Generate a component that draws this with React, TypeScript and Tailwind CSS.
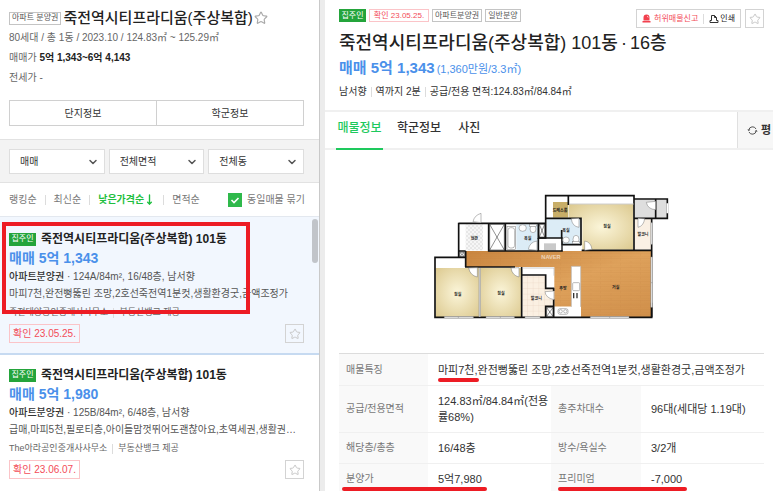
import type { ReactNode } from 'react';
import { ChevronDown, MoveDown, Star } from 'lucide-react';

type Listing = {
  price: string;
  spec: string;
  memo: string;
  agency: string;
  confirmed: string;
  selected?: boolean;
};

const NAME = '죽전역시티프라디움(주상복합)';

const listings: Listing[] = [
  {
    price: '5억 1,343',
    spec: '124A/84m², 16/48층, 남서향',
    memo: '마피7천,완전뻥뚫린 조망,2호선죽전역1분컷,생활환경굿,금액조정가',
    agency: '죽전태양공인중개사사무소',
    confirmed: '23.05.25.',
    selected: true,
  },
  {
    price: '5억 1,980',
    spec: '125B/84m², 6/48층, 남서향',
    memo: '급매,마피5천,필로티층,아이들맘껏뛰어도괜찮아요,초역세권,생활권…',
    agency: 'The아라공인중개사사무소',
    confirmed: '23.06.07.',
  },
];

function Divider() {
  return <span className="h-[10px] w-px shrink-0 bg-[#dcdcdc]" />;
}

function OwnerBadge() {
  return (
    <span className="flex h-[13px] w-[27px] shrink-0 items-center justify-center bg-[#24a43b] text-[8px] font-normal text-white">
      집주인
    </span>
  );
}

function Tag({ children }: { children: ReactNode }) {
  return (
    <span className="flex h-[13px] shrink-0 items-center border border-[#c4c4c4] px-[2px] text-[8px] text-[#555]">
      {children}
    </span>
  );
}

function StarButton() {
  return (
    <button
      aria-label="관심매물"
      className="flex size-[19px] shrink-0 items-center justify-center border border-[#d3d3d3] text-[#c8c8c8]"
    >
      <Star size={12} strokeWidth={2} />
    </button>
  );
}

function Filter({ label, value }: { label: string; value: string }) {
  return (
    <div className="relative flex-1">
      <select
        aria-label={label}
        className="block h-[25px] w-full appearance-none border border-[#dedede] bg-white pl-[10px] text-[10px] text-[#333]"
      >
        <option>{value}</option>
      </select>
      <ChevronDown
        size={12}
        strokeWidth={3}
        className="pointer-events-none absolute top-[7px] right-[6px] text-[#555]"
      />
    </div>
  );
}

function ListingCard({ item }: { item: Listing }) {
  return (
    <article
      className={
        item.selected
          ? 'relative border-b-2 border-[#c6daf1] bg-[#f2f7fe] pt-[13px] pr-[15px] pb-[10px] pl-[9px]'
          : 'relative bg-white pt-[11px] pr-[15px] pb-[10px] pl-[9px]'
      }
    >
      <h3 className="flex h-[18px] items-center gap-[5px] text-[12px] font-bold text-[#222]">
        <OwnerBadge />
        <a href="#listing">{NAME} 101동</a>
      </h3>
      <p className="text-[14px] leading-[20px] font-bold text-[#4a90ea]">매매 {item.price}</p>
      <p className="text-[10px] leading-[18px] text-[#555]">
        <span className="font-medium text-[#333]">아파트분양권</span> · {item.spec}
      </p>
      <p className="text-[10px] leading-[15px] whitespace-nowrap text-[#555]">{item.memo}</p>
      <p className="mt-[2px] flex h-[19px] items-center gap-[5px] text-[9px] whitespace-nowrap text-[#666]">
        {item.agency}
        <Divider />
        부동산뱅크 제공
      </p>
      <div className="mt-[2px] flex items-center justify-between">
        <span className="flex h-[19px] w-[71px] items-center justify-center border border-[#fbc4c8] text-[10px] whitespace-nowrap text-[#f34c59]">
          확인 {item.confirmed}
        </span>
        <StarButton />
      </div>
      {item.selected && (
        <div className="pointer-events-none absolute top-[5px] left-[2px] h-[92px] w-[248px] border-4 border-[#ed1c24]" />
      )}
    </article>
  );
}

function Sidebar() {
  return (
    <aside className="relative flex w-[320px] shrink-0 flex-col border-r border-[#c9c9c9] bg-white">
      <header className="border-b border-[#e2e2e2] pt-[8px] pr-[15px] pb-[13px] pl-[9px]">
        <div className="flex h-[20px] items-center">
          <Tag>아파트 분양권</Tag>
          <h1 className="ml-[2px] text-[15px] font-medium whitespace-nowrap text-[#222]">{NAME}</h1>
          <button aria-label="관심단지" className="ml-px text-[#aaa]">
            <Star size={14} strokeWidth={2} />
          </button>
        </div>
        <p className="text-[10px] leading-[20px] text-[#666]">
          80세대 / 총 1동 / 2023.10 / 124.83㎡ ~ 125.29㎡
        </p>
        <p className="text-[10px] leading-[20px] text-[#666]">
          매매가 <strong className="font-bold text-[#222]">5억 1,343~6억 4,143</strong>
        </p>
        <p className="text-[10px] leading-[20px] text-[#666]">전세가 -</p>
        <div className="mt-[12px] flex h-[26px] border border-[#d0d0d0] text-[10px] text-[#333]">
          <button className="flex-1 border-r border-[#d0d0d0]">단지정보</button>
          <button className="flex-1">학군정보</button>
        </div>
      </header>

      <div className="flex gap-[4px] border-b border-[#e2e2e2] bg-[#f3f3f3] pt-[9px] pr-[15px] pb-[8px] pl-[9px]">
        <Filter label="거래방식" value="매매" />
        <Filter label="면적" value="전체면적" />
        <Filter label="동" value="전체동" />
      </div>

      <div className="flex h-[34px] items-center justify-between border-b border-[#e3e8ef] pr-[14px] pl-[9px] text-[10px] whitespace-nowrap text-[#777]">
        <div className="flex items-center gap-[8px]">
          <button>랭킹순</button>
          <Divider />
          <button>최신순</button>
          <Divider />
          <button className="flex items-center font-bold text-[#1fbf3f]">
            낮은가격순
            <MoveDown size={11} strokeWidth={3} />
          </button>
          <Divider />
          <button>면적순</button>
        </div>
        <label className="flex items-center gap-[5px]">
          <span className="relative flex">
            <input type="checkbox" defaultChecked className="size-[14px] appearance-none bg-[#2fb94b]" />
            <svg viewBox="0 0 14 14" className="pointer-events-none absolute inset-0 size-[14px]">
              <path d="M3.5 7l2.5 2.5L10.5 5" fill="none" stroke="#fff" strokeWidth="1.6" />
            </svg>
          </span>
          동일매물 묶기
        </label>
      </div>

      <div className="relative">
        {listings.map((item) => (
          <ListingCard key={item.price} item={item} />
        ))}
        <div className="absolute top-[2px] right-px h-[44px] w-[6px] rounded-full bg-[#c1c4c9]" />
      </div>
    </aside>
  );
}

function FloorPlan() {
  const labels: [number, number, string][] = [
    [148, 163, '현관'],
    [308, 161, '욕실'],
    [423, 139, '욕실'],
    [405, 77, '드레스룸'],
    [546, 125, '침실'],
    [654, 151, '발코니'],
    [98, 330, '침실'],
    [228, 328, '침실'],
    [334, 343, '발코니'],
    [414, 313, '주방'],
    [572, 308, '거실'],
  ];
  return (
    <svg viewBox="0 0 750 420" className="h-[140px] w-[250px]" role="img" aria-label="평면도">
      <defs>
        <radialGradient id="room" cx="50%" cy="50%" r="70%">
          <stop offset="0" stopColor="#fbf5d9" />
          <stop offset="1" stopColor="#dcc98f" />
        </radialGradient>
        <linearGradient id="wood" x1="0" y1="0" x2="1" y2="1">
          <stop offset="0" stopColor="#c9853f" />
          <stop offset="0.5" stopColor="#dfa25c" />
          <stop offset="1" stopColor="#d08f4a" />
        </linearGradient>
        <pattern id="planks" width="60" height="14" patternUnits="userSpaceOnUse">
          <path d="M0 0H60M0 7H60M18 0V7M46 7V14" stroke="#b87432" strokeWidth="0.8" opacity="0.4" />
        </pattern>
        <pattern id="tiles" width="17" height="17" patternUnits="userSpaceOnUse">
          <rect width="17" height="17" fill="#fbf0e2" />
          <path d="M0 0H17M0 0V17" stroke="#e2cdb8" strokeWidth="1.5" />
        </pattern>
        <pattern id="mosaic" width="12" height="12" patternUnits="userSpaceOnUse">
          <rect width="12" height="12" fill="#f6f6f6" />
          <path d="M0 0L12 12M12 0L0 12" stroke="#cfcfcf" strokeWidth="1.2" />
        </pattern>
      </defs>

      <path
        d="M101 112H362V29H627V39H727V97H680V394H30V214H101Z"
        fill="#fff"
      />
      <path d="M122 195H680V394H468V362H388V243H122Z" fill="url(#wood)" />
      <path d="M122 195H680V394H468V362H388V243H122Z" fill="url(#planks)" />
      <rect x="32" y="246" width="130" height="147" fill="url(#room)" />
      <rect x="166" y="246" width="124" height="147" fill="url(#room)" />
      <path d="M432 55H625V191H472V97H432Z" fill="url(#room)" />
      <rect x="384" y="48" width="46" height="47" fill="#c8ae68" />
      <rect x="122" y="115" width="52" height="78" fill="url(#mosaic)" />
      <rect x="274" y="115" width="66" height="78" fill="#dcecf6" />
      <path d="M365 99H468V174H411V156H365Z" fill="#dcecf6" />
      <rect x="629" y="41" width="96" height="55" fill="#dedede" />
      <rect x="629" y="99" width="50" height="92" fill="#faf0e4" />
      <path d="M293 269H362V307H384V360H362V393H293Z" fill="url(#tiles)" />
      <rect x="293" y="246" width="94" height="21" fill="#fff" />
      <rect x="364" y="269" width="23" height="36" fill="#fff" />
      <rect x="439" y="241" width="28" height="122" fill="#fff" />
      <rect x="388" y="362" width="80" height="31" fill="#fff" />
      <rect x="411" y="178" width="57" height="17" fill="#fff" />
      <rect x="357" y="172" width="36" height="22" fill="#c9c9c9" />

      <g fill="none" stroke="#111" strokeWidth="5">
        <path d="M101 112H362M101 110V214M101 195H122M122 195V243M120 214H30V394H680V350M30 394V212" />
        <path d="M191 112V195H340M241 112V195M340 112V156H362V29H627V193M362 29V97H468V178M627 39H727V97H627M692 39V97" />
        <path d="M340 156V195H411V156H340M411 176H468M470 193H680V394M680 97V193M410 132V156M430 29V57M120 243H180M162 243H270M290 243V394M290 267H362V307H388M386 307V315M386 340V394M362 394V361H388" />
      </g>
      <path d="M164 246V392" stroke="#999" strokeWidth="6" />
      <path d="M164 246V392" stroke="#e4e4e4" strokeWidth="2" />
      <path d="M432 54H627M411 192V178M292 246H387V269M439 363V241H467V363" fill="none" stroke="#b5b5b5" strokeWidth="2" />
      <g stroke="#222" strokeWidth="1.5" fill="none">
        <path d="M194 115L238 192M238 115L194 192M194 115H238V192H194ZM343 115L359 153M359 115L343 153M343 115H359V153H343ZM365 365L384 391M384 365L365 391M365 365H384V391H365ZM104 199H118V212H104ZM104 199L118 212M118 199L104 212" />
      </g>
      <g fill="#fff" stroke="#777" strokeWidth="1.5">
        <rect x="246" y="121" width="26" height="69" />
        <rect x="249" y="125" width="20" height="61" rx="8" />
        <ellipse cx="293" cy="126" rx="11" ry="10" />
        <ellipse cx="324" cy="129" rx="9" ry="11" />
        <rect x="314" y="115" width="20" height="7" />
        <ellipse cx="423" cy="162" rx="10" ry="9" />
        <ellipse cx="453" cy="160" rx="9" ry="12" />
        <rect x="443" y="166" width="20" height="7" />
        <rect x="443" y="290" width="21" height="24" rx="3" />
        <rect x="399" y="368" width="30" height="17" rx="6" />
        <circle cx="407" cy="376" r="5" />
        <circle cx="421" cy="376" r="5" />
        <path d="M168 110V82Q148 88 144 107Z" />
        <path d="M336 193V165Q314 168 310 190Z" />
        <path d="M462 97V124Q441 121 439 98Z" />
        <path d="M479 193V165Q498 168 501 190Z" />
        <path d="M639 97V124Q656 120 659 98Z" />
        <path d="M692 46V71Q668 70 664 49Z" />
        <path d="M157 245V273Q135 268 131 246Z" />
        <path d="M282 245V273Q261 268 258 246Z" />
        <path d="M387 341V315L360 317Q362 336 387 341Z" />
      </g>
      <path d="M446 321V337M456 321V337" stroke="#333" strokeWidth="4" />
      <g stroke="#fff" strokeWidth="5">
        <path d="M58 394H145M183 394H268M300 394H345M496 394H612M680 110V175M680 213V364M727 52V82" />
      </g>
      <g stroke="#888" strokeWidth="1.5" fill="none">
        <path d="M58 392H145V396H58ZM183 392H268V396H183ZM300 392H345V396H300ZM496 392H612V396H496ZM678 110H682V175H678ZM678 213H682V364H678ZM100 392V396M226 392V396M554 392V396M678 290H682" />
      </g>
      <text x="378" y="219" textAnchor="middle" className="fill-white text-[17px] font-bold opacity-60">
        NAVER
      </text>
      {labels.map(([x, y, label]) => (
        <text key={`${x}-${y}`} x={x} y={y} textAnchor="middle" className="fill-[#222] text-[12px] font-bold">
          {label}
        </text>
      ))}
    </svg>
  );
}

function Label({ children, mark }: { children: ReactNode; mark?: ReactNode }) {
  return (
    <th scope="row" className="relative bg-[#f9f9f9] pl-[7px] text-left text-[10px] font-normal text-[#777]">
      {children}
      {mark}
    </th>
  );
}

function DetailTable() {
  return (
    <table className="mt-[27px] w-full table-fixed border-collapse border-t border-[#dcdcdc] text-[11px] leading-[16px] text-[#333]">
      <colgroup>
        <col className="w-[89px]" />
        <col />
        <col className="w-[90px]" />
        <col />
      </colgroup>
      <tbody>
        <tr className="h-[32px] border-b border-[#f0f0f0]">
          <Label>매물특징</Label>
          <td colSpan={3} className="pl-[10px] whitespace-nowrap">
            <span className="relative">
              마피7천
              <span className="absolute top-[14px] left-0 h-[4px] w-[41px] rounded-full bg-[#ed1c24]" />
            </span>
            ,완전뻥뚫린 조망,2호선죽전역1분컷,생활환경굿,금액조정가
          </td>
        </tr>
        <tr className="h-[47px] border-b border-[#f0f0f0]">
          <Label>공급/전용면적</Label>
          <td className="pl-[10px] break-all">124.83㎡/84.84㎡(전용률68%)</td>
          <Label>총주차대수</Label>
          <td className="pl-[10px] whitespace-nowrap">96대(세대당 1.19대)</td>
        </tr>
        <tr className="h-[31px] border-b border-[#f0f0f0]">
          <Label>해당층/총층</Label>
          <td className="pl-[10px]">16/48층</td>
          <Label>방수/욕실수</Label>
          <td className="pl-[10px]">3/2개</td>
        </tr>
        <tr className="h-[31px]">
          <Label
            mark={<span className="absolute top-[23px] left-[3px] z-10 h-[4px] w-[145px] rounded-full bg-[#ed1c24]" />}
          >
            분양가
          </Label>
          <td className="pl-[10px]">5억7,980</td>
          <Label
            mark={<span className="absolute top-[23px] left-[7px] z-10 h-[4px] w-[129px] rounded-full bg-[#ed1c24]" />}
          >
            프리미엄
          </Label>
          <td className="pl-[10px]">-7,000</td>
        </tr>
      </tbody>
    </table>
  );
}

function Detail() {
  return (
    <main className="min-w-0 flex-1 bg-white">
      <header className="pt-[9px] pr-[9px] pb-[8px] pl-[14px]">
        <div className="flex h-[19px] justify-between">
          <div className="flex gap-[3px]">
            <OwnerBadge />
            <span className="flex h-[13px] w-[60px] items-center justify-center border border-[#fbc4c8] text-[8px] text-[#f34c59]">
              확인 23.05.25.
            </span>
            <Tag>아파트분양권</Tag>
            <Tag>일반분양</Tag>
          </div>
          <div className="flex gap-[4px]">
            <div className="flex items-center gap-[5px] border border-[#d3d3d3] px-[5px] text-[8px]">
              <button className="flex items-center gap-[3px] text-[#f34c59]">
                <svg viewBox="0 0 9 9" className="size-[9px]" fill="#f2404e">
                  <path d="M1.5 6.5V3.5a3 3 0 0 1 6 0V6.5ZM0.5 7H8.5V8.5H0.5Z" />
                  <path d="M5 2.2a1.4 1.4 0 0 1 1.2 1.3" fill="none" stroke="#fff" strokeWidth="0.7" />
                </svg>
                허위매물신고
              </button>
              <Divider />
              <button className="flex items-center gap-px text-[#222]">
                <svg viewBox="0 0 10 10" className="size-[10px]" fill="none" stroke="#333">
                  <path d="M2.5 6.5V1.5H5.5L7.5 3.5V6.5M5.5 1.5V3.5H7.5M2.5 6.5H1V8.5H9V6.5H7.5" />
                </svg>
                인쇄
              </button>
            </div>
            <StarButton />
          </div>
        </div>
        <h2 className="mt-[3px] flex items-center gap-[3px] text-[18px] leading-[25px] font-medium whitespace-nowrap text-[#222]">
          <span>{NAME} 101동</span>
          <span>·</span>
          <span>16층</span>
        </h2>
        <p className="leading-[24px] text-[#4a90ea]">
          <strong className="text-[15px] font-bold">매매 5억 1,343</strong>
          <span className="ml-[2px] text-[11px]">(1,360만원/3.3㎡)</span>
        </p>
        <p className="flex h-[21px] items-center gap-[4px] text-[10px] text-[#333]">
          남서향
          <Divider />
          역까지 2분
          <Divider />
          공급/전용 면적:124.83㎡/84.84㎡
        </p>
      </header>

      <nav className="flex h-[40px] items-stretch border-y-2 border-[#f0f0f0] pl-[11px] text-[12px] font-medium text-[#333]">
        <button className="mb-[-2px] w-[47px] border-b-2 border-[#1ec95d] pb-[5px] whitespace-nowrap text-[#1ec95d]">
          매물정보
        </button>
        <button className="ml-[14px] pb-[5px] whitespace-nowrap">학군정보</button>
        <button className="ml-[17px] pb-[5px] whitespace-nowrap">사진</button>
        <button className="ml-auto flex w-[36px] items-center gap-[3px] overflow-hidden border-l border-[#e0e0e0] bg-[#f7f7f7] pl-[9px] text-[11px] font-bold whitespace-nowrap">
          <svg viewBox="0 0 11 11" className="size-[11px] shrink-0" fill="none" stroke="#555">
            <path d="M1.8 5A3.8 3.8 0 0 1 9 4M9.2 6A3.8 3.8 0 0 1 2 7" />
            <path d="M0.3 4.5L1.8 6.2L3.4 4.5ZM7.6 6.5L9.2 4.8L10.7 6.5Z" fill="#555" stroke="none" />
          </svg>
          평
        </button>
      </nav>

      <section className="pt-[36px] pr-[9px] pl-[14px]">
        <div className="flex justify-center pr-[4px]">
          <FloorPlan />
        </div>
        <DetailTable />
      </section>
    </main>
  );
}

export default function App() {
  return (
    <div className="flex h-screen overflow-hidden bg-[#ececec] font-['Liberation_Sans','Noto_Sans_CJK_KR',sans-serif]">
      <Sidebar />
      <div className="w-[5px] shrink-0" />
      <Detail />
    </div>
  );
}
